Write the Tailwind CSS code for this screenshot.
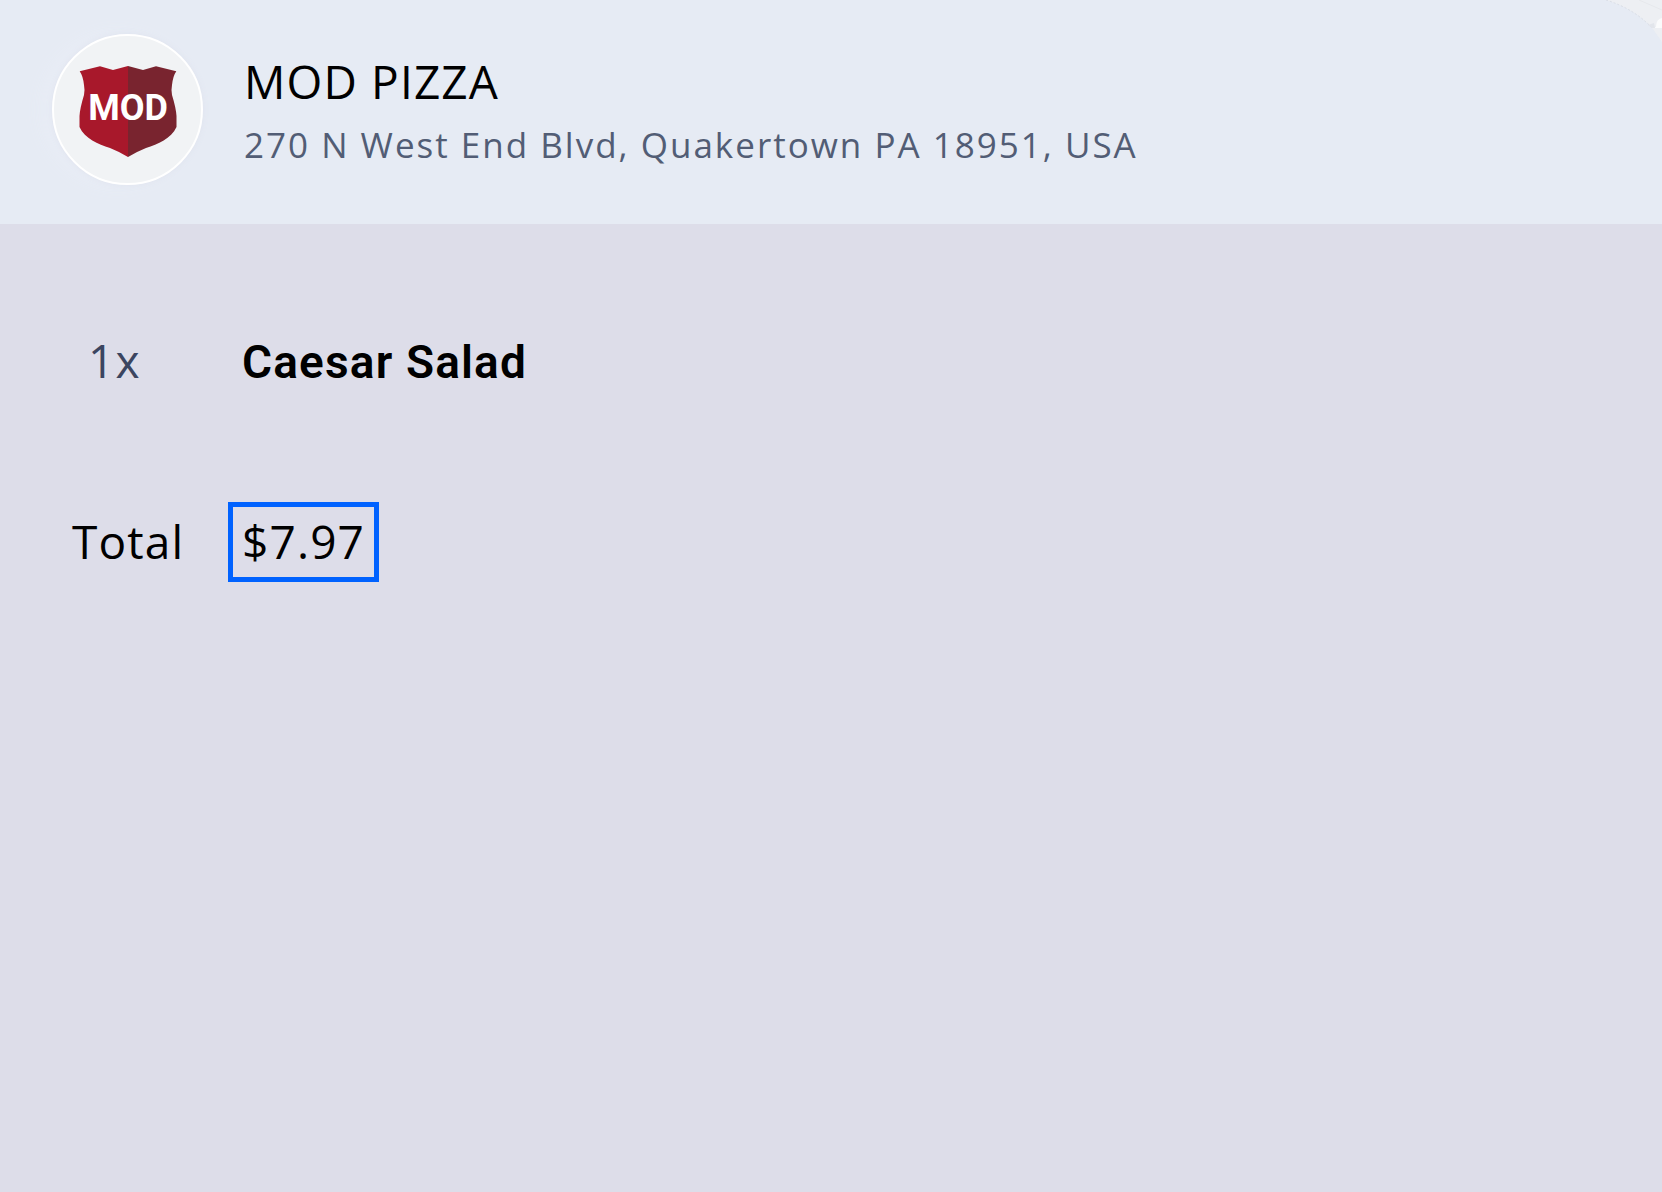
<!DOCTYPE html>
<html lang="en">
<head>
    <meta charset="UTF-8">
    <meta name="viewport" content="width=device-width, initial-scale=1.0">
    <title>MOD Pizza - Order</title>
    <script src="https://cdn.jsdelivr.net/npm/@tailwindcss/browser@4"></script>
</head>
<body class="min-h-screen bg-[#dddde9] font-['Open_Sans','Noto_Sans',sans-serif] text-black">

    <!-- Store header -->
    <header class="relative flex items-start gap-[41px] overflow-hidden bg-[#e6ebf4] px-13 pt-[34px] pb-[39px]">
        <div class="flex size-[151px] shrink-0 justify-center rounded-full border-2 border-white bg-[#f1f3f5] pt-[30px] shadow-[0_0_6px_#dfe3ee,-10px_0_20px_#e9edf6]">
            <svg class="h-[92px] w-[98px]" viewBox="0 0 98 92" role="img" aria-label="MOD">
                <path fill="#a8182b" d="M49 0L34 4L21 .3L.7 5.300Q4 10 5 19Q6 24 5 29Q1 42 .5 50V61C6 73 19 78 31 82Q41 86 49 91Z"/>
                <path fill="#79242f" d="M49 0L64 4L77 .3L97.300 5.300Q94 10 93 19Q92 24 93 29Q97 42 97.500 50V61C92 73 79 78 67 82Q57 86 49 91Z"/>
                <text x="49" y="54" text-anchor="middle" class="fill-white font-['Roboto',sans-serif] text-[36px] font-bold">MOD</text>
            </svg>
        </div>
        <div class="pt-[15px]">
            <h1 class="text-[46px] leading-[64px] tracking-wide">MOD PIZZA</h1>
            <p class="text-[35px] leading-[64px] tracking-[2px] text-[#525d75]">270 N West End Blvd, Quakertown PA 18951, USA</p>
        </div>
        <!-- Faded map edge in the corner -->
        <svg class="absolute top-0 right-0 h-[42px] w-[56px]" viewBox="0 0 56 42" aria-hidden="true">
            <path fill="#edeff3" d="M0 0Q29 9 47 29L56 42V0Z"/>
            <path fill="none" stroke="#d9dde6" stroke-dasharray="2 2" d="M0 0Q29 9 47 29"/>
            <path fill="none" stroke="#e6e8ec" d="M33 0L56 10"/>
            <path fill="#fafbfc" d="M46 28H56V18Q50 19 50 27Z"/>
            <path fill="#e2e5eb" d="M42 25L48 23L49 28L46 28Z"/>
        </svg>
    </header>

    <!-- Order lines -->
    <main class="grid grid-cols-[156px_1fr] items-baseline gap-y-[101px] px-[72px] pt-[97px] text-[46px] leading-[78px] tracking-wide">
        <p class="pl-4 text-[#3b4560]">1x</p>
        <h2 class="pl-3.5 font-['Roboto',sans-serif] font-semibold">Caesar Salad</h2>
        <p>Total</p>
        <p class="justify-self-start border-[5px] border-[#0062ff] px-[9px] pb-0.5 leading-[68px]">$7.97</p>
    </main>

</body>
</html>
